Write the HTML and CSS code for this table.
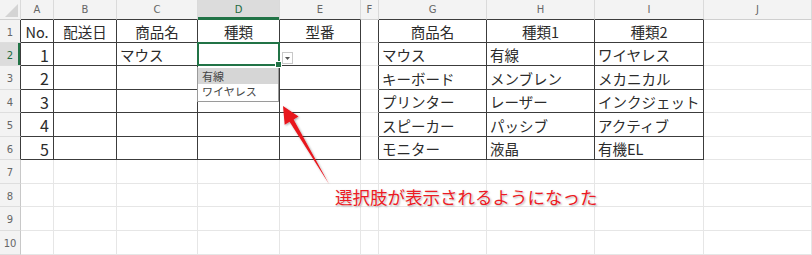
FILE: index.html
```html
<!DOCTYPE html>
<html lang="ja">
<head>
<meta charset="utf-8">
<link rel="stylesheet" href="styles.css">
</head>
<body>
<div class="wrap">
<div class="sheet">
  <!-- header row -->
  <div class="c h corner"><span class="tri"></span></div>
  <div class="c h bb">A</div><div class="c h bb">B</div><div class="c h bb">C</div><div class="c h bb sel-col">D</div><div class="c h bb">E</div><div class="c h">F</div><div class="c h bb">G</div><div class="c h bb">H</div><div class="c h bb">I</div><div class="c h">J</div>
  <!-- row 1 -->
  <div class="c h rh br">1</div>
  <div class="c t br bb ctr">No.</div><div class="c t br bb ctr">配送日</div><div class="c t br bb ctr">商品名</div><div class="c t br bb ctr">種類</div><div class="c t br bb ctr">型番</div>
  <div class="c br"></div>
  <div class="c t br bb ctr">商品名</div><div class="c t br bb ctr">種類1</div><div class="c t br bb ctr">種類2</div>
  <div class="c"></div>
  <!-- row 2 -->
  <div class="c h rh br sel-row">2</div>
  <div class="c t br bb num">1</div><div class="c t br bb"></div><div class="c t br bb">マウス</div><div class="c t br bb active"><span class="handle"></span><span class="ddbtn"><svg width="5" height="3" viewBox="0 0 5 3"><path d="M0 0H5L2.5 3Z" fill="#555"/></svg></span><div class="ddlist"><div class="opt hi">有線</div><div class="opt">ワイヤレス</div></div></div><div class="c t br bb"></div>
  <div class="c br"></div>
  <div class="c t br bb">マウス</div><div class="c t br bb">有線</div><div class="c t br bb">ワイヤレス</div>
  <div class="c"></div>
  <!-- row 3 -->
  <div class="c h rh br">3</div>
  <div class="c t br bb num">2</div><div class="c t br bb"></div><div class="c t br bb"></div><div class="c t br bb"></div><div class="c t br bb"></div>
  <div class="c br"></div>
  <div class="c t br bb">キーボード</div><div class="c t br bb">メンブレン</div><div class="c t br bb">メカニカル</div>
  <div class="c"></div>
  <!-- row 4 -->
  <div class="c h rh br">4</div>
  <div class="c t br bb num">3</div><div class="c t br bb"></div><div class="c t br bb"></div><div class="c t br bb"></div><div class="c t br bb"></div>
  <div class="c br"></div>
  <div class="c t br bb">プリンター</div><div class="c t br bb">レーザー</div><div class="c t br bb">インクジェット</div>
  <div class="c"></div>
  <!-- row 5 -->
  <div class="c h rh br">5</div>
  <div class="c t br bb num">4</div><div class="c t br bb"></div><div class="c t br bb"></div><div class="c t br bb"></div><div class="c t br bb"></div>
  <div class="c br"></div>
  <div class="c t br bb">スピーカー</div><div class="c t br bb">パッシブ</div><div class="c t br bb">アクティブ</div>
  <div class="c"></div>
  <!-- row 6 -->
  <div class="c h rh br">6</div>
  <div class="c t br bb num">5</div><div class="c t br bb"></div><div class="c t br bb"></div><div class="c t br bb"></div><div class="c t br bb"></div>
  <div class="c br"></div>
  <div class="c t br bb">モニター</div><div class="c t br bb">液晶</div><div class="c t br bb">有機EL</div>
  <div class="c"></div>
  <!-- row 7 -->
  <div class="c h rh">7</div>
  <div class="c"></div><div class="c"></div><div class="c"></div><div class="c"></div><div class="c"></div><div class="c"></div><div class="c"></div><div class="c"></div><div class="c"></div><div class="c"></div>
  <!-- row 8 -->
  <div class="c h rh">8</div>
  <div class="c"></div><div class="c"></div><div class="c"></div><div class="c"></div><div class="c"></div><div class="c"></div><div class="c"></div><div class="c"></div><div class="c"></div><div class="c"></div>
  <!-- row 9 -->
  <div class="c h rh">9</div>
  <div class="c"></div><div class="c"></div><div class="c"></div><div class="c"></div><div class="c"></div><div class="c"></div><div class="c"></div><div class="c"></div><div class="c"></div><div class="c"></div>
  <!-- row 10 -->
  <div class="c h rh">10</div>
  <div class="c"></div><div class="c"></div><div class="c"></div><div class="c"></div><div class="c"></div><div class="c"></div><div class="c"></div><div class="c"></div><div class="c"></div><div class="c"></div>
</div>
<svg class="arrow" width="812" height="255" viewBox="0 0 812 255">
  <defs>
    <filter id="sh" x="-20%" y="-20%" width="140%" height="140%">
      <feDropShadow dx="1" dy="1" stdDeviation="0.8" flood-color="#000" flood-opacity="0.35"/>
    </filter>
  </defs>
  <polygon filter="url(#sh)" fill="#e8141b" points="283,106 298.5,116.5 293.6,119.4 329,184 289.6,121.8 284.7,124.7"/>
</svg>
<div class="note">選択肢が表示されるようになった</div>
</div>
</body>
</html>
```
FILE: styles.css
```css
html, body {
  margin: 0;
  padding: 0;
  background: #fff;
}
.wrap {
  position: relative;
  width: 812px;
  height: 255px;
  overflow: hidden;
}
.sheet {
  display: grid;
  grid-template-columns: 21px 33px 63px 81px 82px 81px 18px 108px 108px 109px 108px;
  grid-template-rows: 20px 23px 23px 24px 23px 24px 23px 24px 23px 24px 24px;
  font-family: "Noto Sans CJK JP", "Noto Sans", sans-serif;
}
.c {
  box-sizing: border-box;
  border-right: 1px solid #e6e6e6;
  border-bottom: 1px solid #e6e6e6;
  display: flex;
  align-items: center;
  overflow: visible;
  white-space: nowrap;
  min-width: 0;
}
.h {
  background: #f3f3f3;
  border-right-color: #dadada;
  border-bottom-color: #cfcfcf;
  color: #666;
  font-family: "DejaVu Sans", "Noto Sans", sans-serif;
  font-size: 10px;
  justify-content: center;
}
.rh {
  border-bottom-color: #dedede;
  border-right-color: #c8c8c8;
  font-size: 10px;
  padding-top: 2px;
}
.corner {
  position: relative;
}
.tri {
  position: absolute;
  right: 2px;
  bottom: 2px;
  width: 0;
  height: 0;
  border-left: 13px solid transparent;
  border-bottom: 13px solid #d4d4d4;
}
.sel-col {
  background: #dcdcdc;
  color: #1d6b3e;
  box-shadow: inset 0 -2px 0 #217346;
}
.sel-row {
  background: #dcdcdc;
  color: #1d6b3e;
  box-shadow: inset -2px 0 0 #217346;
}
.t {
  font-size: 14.5px;
  color: #2b2b2b;
  padding-left: 3px;
  padding-top: 1px;
}
.ctr {
  justify-content: center;
  padding-left: 0;
}
.num {
  justify-content: flex-end;
  padding-left: 0;
  padding-right: 4px;
  font-size: 16px;
}
.br { border-right-color: #3c3c3c; }
.bb { border-bottom-color: #3c3c3c; }
.h.bb { border-bottom-color: #3c3c3c; }
.sel-col.bb { border-bottom-color: #217346; }
.active {
  position: relative;
}
.active::after {
  content: "";
  position: absolute;
  left: -1px;
  top: -1px;
  right: -1px;
  bottom: -1px;
  border: 2px solid #217346;
  pointer-events: none;
}
.handle {
  position: absolute;
  right: -3px;
  bottom: -3px;
  width: 5px;
  height: 5px;
  background: #217346;
  border: 1px solid #fff;
  z-index: 3;
}
.ddbtn {
  position: absolute;
  left: 84px;
  top: 9px;
  width: 11px;
  height: 12px;
  box-sizing: border-box;
  border: 1px solid #c8c8c8;
  background: #fff;
  display: flex;
  align-items: center;
  justify-content: center;
  z-index: 3;
}
.ddlist {
  position: absolute;
  left: -1px;
  top: 24px;
  width: 82px;
  height: 35px;
  box-sizing: border-box;
  background: #fff;
  border: 1px solid #9a9a9a;
  border-top: none;
  z-index: 2;
  font-size: 11px;
  color: #444;
  padding-top: 1px;
}
.opt {
  height: 15px;
  line-height: 15px;
  padding-left: 4px;
}
.opt.hi {
  background: #d6d6d6;
  height: 16px;
  line-height: 16px;
}
.arrow {
  position: absolute;
  left: 0;
  top: 0;
  pointer-events: none;
}
.note {
  position: absolute;
  left: 335px;
  top: 185px;
  font-family: "Noto Sans CJK JP", sans-serif;
  font-size: 17.5px;
  line-height: 24px;
  color: #ec1b24;
  white-space: nowrap;
  text-shadow: 0 0 2px #fff, 1px 1px 2px rgba(0, 0, 0, 0.35);
}
```
